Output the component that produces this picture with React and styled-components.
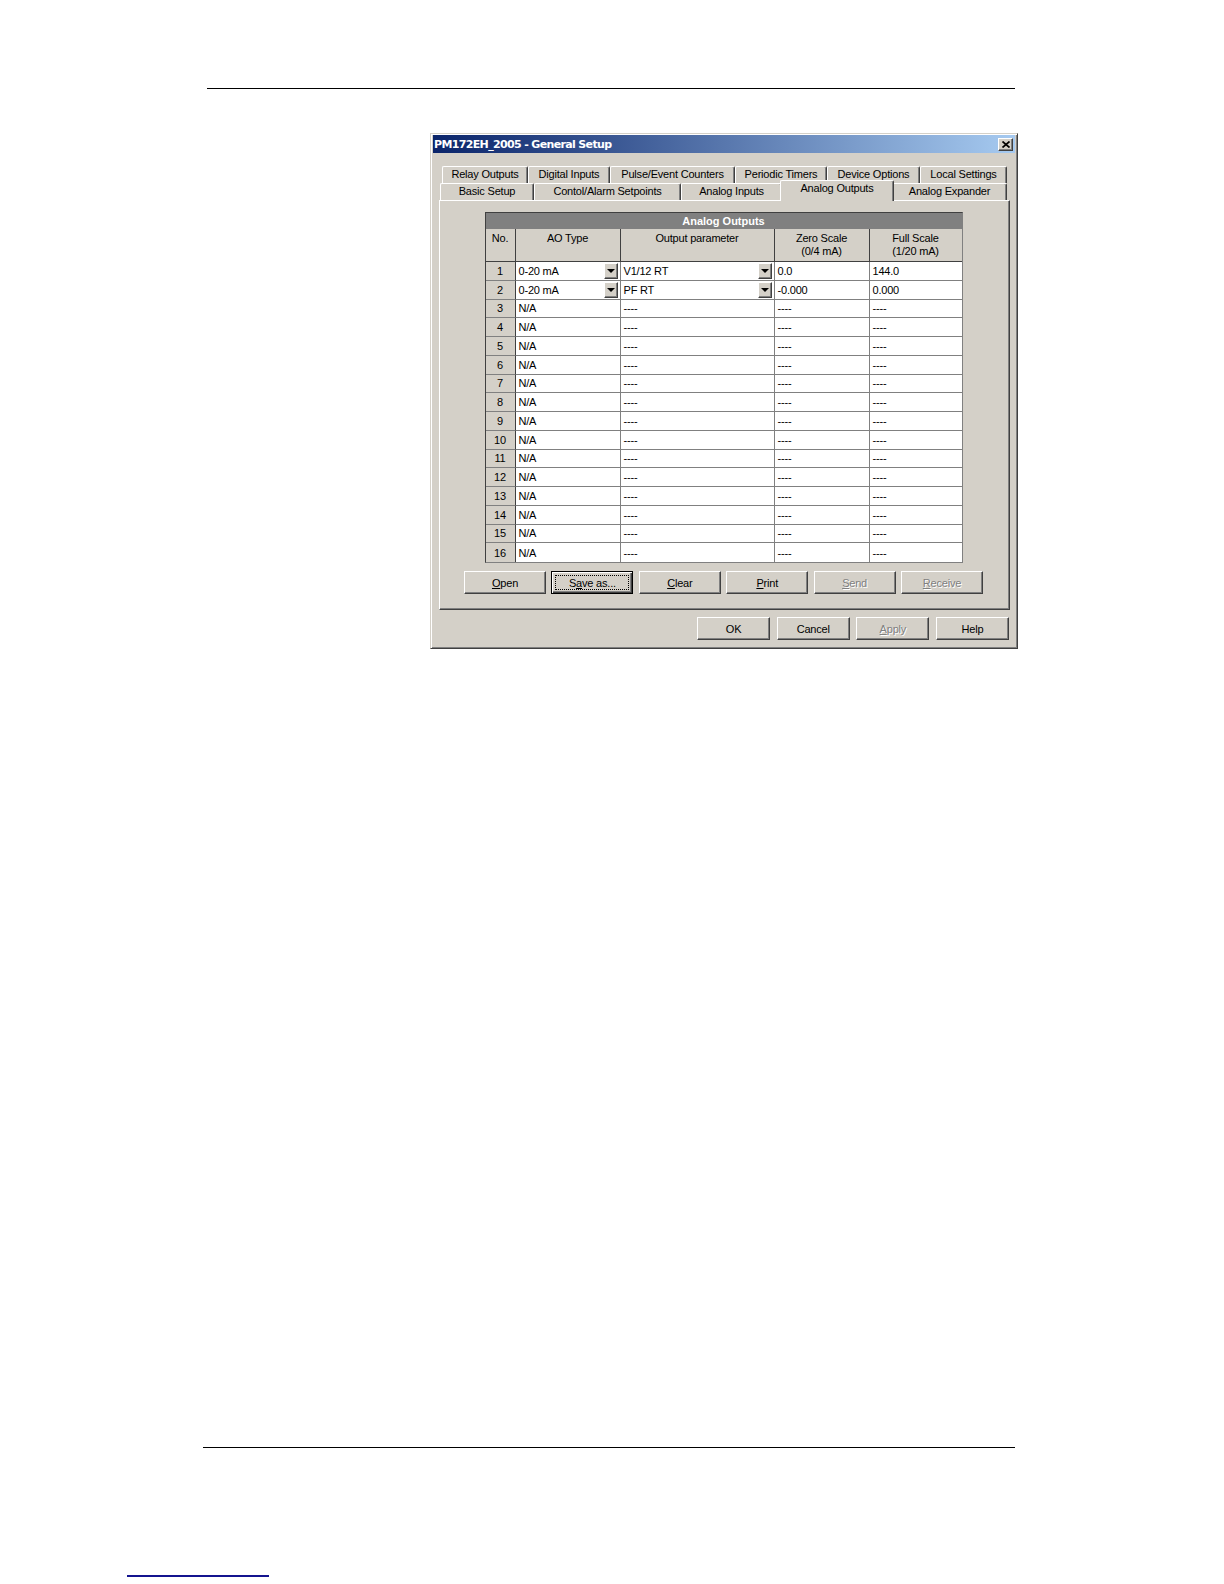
import React from "react";
import styled, { createGlobalStyle, css } from "styled-components";

const GlobalStyle = createGlobalStyle`
  * { box-sizing: border-box; }
  body {
    margin: 0;
    background: #fff;
  }
`;

const UI_FONT = `"Liberation Sans", Arial, sans-serif`;

// page frame: header rule, dialog picture, footer rule, link underline
const Page = styled.div`
  width: 1224px;
  height: 1584px;
  background: #fff;
  display: flex;
  flex-direction: column;
  overflow: hidden;
`;

const Rule = styled.div`
  flex-shrink: 0;
  height: ${(p) => p.$thick || 1}px;
  width: ${(p) => p.$width}px;
  margin-top: ${(p) => p.$top}px;
  margin-left: ${(p) => p.$left}px;
  background: ${(p) => p.$color || "#000"};
`;

// dialog window
const Window = styled.div`
  flex-shrink: 0;
  margin: 44px 0 0 430px;
  width: 588px;
  padding: 1px 2px 8px 2px;
  background: #d4d0c8;
  border: 1px solid;
  border-color: #d4d0c8 #404040 #404040 #d4d0c8;
  box-shadow: inset 1px 1px #fff, inset -1px -1px #808080;
  font-family: ${UI_FONT};
  font-size: 11px;
  letter-spacing: -0.2px;
  color: #000;
`;

const TitleBar = styled.div`
  height: 18px;
  display: flex;
  align-items: center;
  justify-content: space-between;
  padding-left: 1px;
  background: linear-gradient(to right, #0a246a, #a6caf0);
`;

const Title = styled.span`
  font-family: "DejaVu Sans", Verdana, sans-serif;
  font-weight: bold;
  font-size: 11px;
  letter-spacing: -0.65px;
  color: #fff;
  white-space: nowrap;
`;

const CloseButton = styled.div`
  width: 15px;
  height: 13px;
  margin-right: 2px;
  display: flex;
  align-items: center;
  justify-content: center;
  background: #d4d0c8;
  border: 1px solid;
  border-color: #fff #404040 #404040 #fff;
  box-shadow: inset -1px -1px #808080;
`;

const Body = styled.div`
  padding: 13px 5px 0 6px;
  display: flex;
  flex-direction: column;
`;

// property sheet tabs
const TabRow = styled.div`
  display: flex;
  height: 17px;
  margin-left: ${(p) => p.$indent}px;
`;

const Tab = styled.div`
  flex-shrink: 0;
  width: ${(p) => p.$w}px;
  height: 17px;
  background: #d4d0c8;
  border-top: 1px solid #fff;
  border-left: 1px solid #fff;
  border-right: 1px solid #404040;
  border-radius: 2px 2px 0 0;
  box-shadow: inset -1px 0 #808080;
  text-align: center;
  line-height: 15px;
  white-space: nowrap;

  ${(p) =>
    p.$active &&
    css`
      position: relative;
      z-index: 2;
      width: ${p.$w + 4}px;
      height: 21px;
      margin: -3px -2px -1px;
      line-height: 14px;
    `}
`;

const Panel = styled.div`
  height: 410px;
  display: flex;
  flex-direction: column;
  align-items: center;
  padding: 11px 2px 0 0;
  border: 1px solid;
  border-color: #fff #404040 #404040 #fff;
  box-shadow: inset -1px -1px #808080;
`;

// grid of analog outputs
const COLS = "30px 105px 154px 95px 92px";

const Table = styled.div`
  width: 478px;
  background: #fff;
  border: 1px solid;
  border-color: #404040 #808080 #808080 #404040;
`;

const Caption = styled.div`
  height: 16px;
  background: #808080;
  color: #fff;
  font-weight: bold;
  text-align: center;
  line-height: 16px;
  letter-spacing: 0;
`;

const HeadRow = styled.div`
  display: grid;
  grid-template-columns: ${COLS};
  height: 33px;
  background: #d4d0c8;
`;

const HeadCell = styled.div`
  border-bottom: 1px solid #404040;
  border-right: ${(p) => (p.$last ? "none" : "1px solid #404040")};
  text-align: center;
  line-height: 13px;
  padding-top: 3px;
`;

const Row = styled.div`
  display: grid;
  grid-template-columns: ${COLS};
  height: 18.75px;
`;

const Cell = styled.div`
  display: flex;
  align-items: center;
  justify-content: space-between;
  padding-left: 3px;
  overflow: hidden;
  white-space: nowrap;
  border-bottom: ${(p) => (p.$bottom ? "none" : "1px solid #808080")};
  border-right: ${(p) => (p.$last ? "none" : "1px solid #808080")};
`;

const NumCell = styled(Cell)`
  justify-content: center;
  padding-left: 0;
  background: #d4d0c8;
  border-right: 1px solid #404040;
`;

const DropButton = styled.div`
  flex-shrink: 0;
  width: 14px;
  height: 16px;
  margin-right: 2px;
  display: flex;
  align-items: center;
  justify-content: center;
  background: #d4d0c8;
  border: 1px solid;
  border-color: #fff #404040 #404040 #fff;
  box-shadow: inset -1px -1px #808080;

  &::before {
    content: "";
    border-left: 4px solid transparent;
    border-right: 4px solid transparent;
    border-top: 4px solid #000;
    margin-top: 1px;
  }
`;

// push buttons
const ButtonRow = styled.div`
  display: flex;
  gap: ${(p) => p.$gap}px;
  margin-top: ${(p) => p.$top}px;
  justify-content: ${(p) => p.$justify || "center"};
  margin-right: ${(p) => p.$right || 0}px;
`;

const Button = styled.div`
  position: relative;
  flex-shrink: 0;
  width: ${(p) => p.$w}px;
  height: 23px;
  display: flex;
  align-items: center;
  justify-content: center;
  background: #d4d0c8;
  border: 1px solid;
  border-color: #fff #404040 #404040 #fff;
  box-shadow: inset -1px -1px #808080;
  color: #000;

  ${(p) =>
    p.$default &&
    css`
      border-color: #000;
      box-shadow: inset 1px 1px #fff, inset -1px -1px #404040,
        inset -2px -2px #808080;

      &::after {
        content: "";
        position: absolute;
        inset: 3px;
        border: 1px dotted #000;
      }
    `}

  ${(p) =>
    p.$disabled &&
    css`
      color: #808080;
      text-shadow: 1px 1px 0 #fff;
    `}
`;

const rows = [
  { ao: "0-20 mA", param: "V1/12 RT", zero: "0.0", full: "144.0", edit: true },
  { ao: "0-20 mA", param: "PF RT", zero: "-0.000", full: "0.000", edit: true },
  ...Array.from({ length: 14 }, () => ({
    ao: "N/A",
    param: "----",
    zero: "----",
    full: "----",
  })),
];

const backTabs = [
  ["Relay Outputs", 86],
  ["Digital Inputs", 82],
  ["Pulse/Event Counters", 125],
  ["Periodic Timers", 92],
  ["Device Options", 93],
  ["Local Settings", 87],
];

const frontTabs = [
  ["Basic Setup", 94],
  ["Contol/Alarm Setpoints", 147],
  ["Analog Inputs", 101],
  ["Analog Outputs", 110, true],
  ["Analog Expander", 115],
];

const CloseIcon = () => (
  <svg width="8" height="7" viewBox="0 0 8 7">
    <path d="M0.5 0.5 L7.5 6.5 M7.5 0.5 L0.5 6.5" stroke="#000" strokeWidth="1.7" />
  </svg>
);

const App = () => {
  return (
    <>
      <GlobalStyle />
      <Page>
        <Rule $top={88} $left={207} $width={808} />

        <Window>
          <TitleBar>
            <Title>PM172EH_2005 - General Setup</Title>
            <CloseButton>
              <CloseIcon />
            </CloseButton>
          </TitleBar>

          <Body>
            <TabRow $indent={3}>
              {backTabs.map(([label, w]) => (
                <Tab key={label} $w={w}>
                  {label}
                </Tab>
              ))}
            </TabRow>
            <TabRow $indent={1}>
              {frontTabs.map(([label, w, active]) => (
                <Tab key={label} $w={w} $active={active}>
                  {label}
                </Tab>
              ))}
            </TabRow>

            <Panel>
              <Table>
                <Caption>Analog Outputs</Caption>
                <HeadRow>
                  <HeadCell>No.</HeadCell>
                  <HeadCell>AO Type</HeadCell>
                  <HeadCell>Output parameter</HeadCell>
                  <HeadCell>
                    Zero Scale
                    <br />
                    (0/4 mA)
                  </HeadCell>
                  <HeadCell $last>
                    Full Scale
                    <br />
                    (1/20 mA)
                  </HeadCell>
                </HeadRow>
                {rows.map((r, i) => {
                  const bottom = i === rows.length - 1;
                  return (
                    <Row key={i}>
                      <NumCell $bottom={bottom}>{i + 1}</NumCell>
                      <Cell $bottom={bottom}>
                        {r.ao}
                        {r.edit && <DropButton />}
                      </Cell>
                      <Cell $bottom={bottom}>
                        {r.param}
                        {r.edit && <DropButton />}
                      </Cell>
                      <Cell $bottom={bottom}>{r.zero}</Cell>
                      <Cell $bottom={bottom} $last>
                        {r.full}
                      </Cell>
                    </Row>
                  );
                })}
              </Table>

              <ButtonRow $gap={5.4} $top={8}>
                <Button $w={82}>
                  <u>O</u>pen
                </Button>
                <Button $w={82} $default>
                  S<u>a</u>ve as...
                </Button>
                <Button $w={82}>
                  <u>C</u>lear
                </Button>
                <Button $w={82}>
                  <u>P</u>rint
                </Button>
                <Button $w={82} $disabled>
                  <u>S</u>end
                </Button>
                <Button $w={82} $disabled>
                  <u>R</u>eceive
                </Button>
              </ButtonRow>
            </Panel>

            <ButtonRow $gap={6.67} $top={7} $justify="flex-end" $right={1}>
              <Button $w={73}>OK</Button>
              <Button $w={73}>Cancel</Button>
              <Button $w={73} $disabled>
                <u>A</u>pply
              </Button>
              <Button $w={73}>Help</Button>
            </ButtonRow>
          </Body>
        </Window>

        <Rule $top={798} $left={203} $width={812} />
        <Rule $top={127} $left={127} $width={142} $thick={2} $color="#14148f" />
      </Page>
    </>
  );
};

export default App;
